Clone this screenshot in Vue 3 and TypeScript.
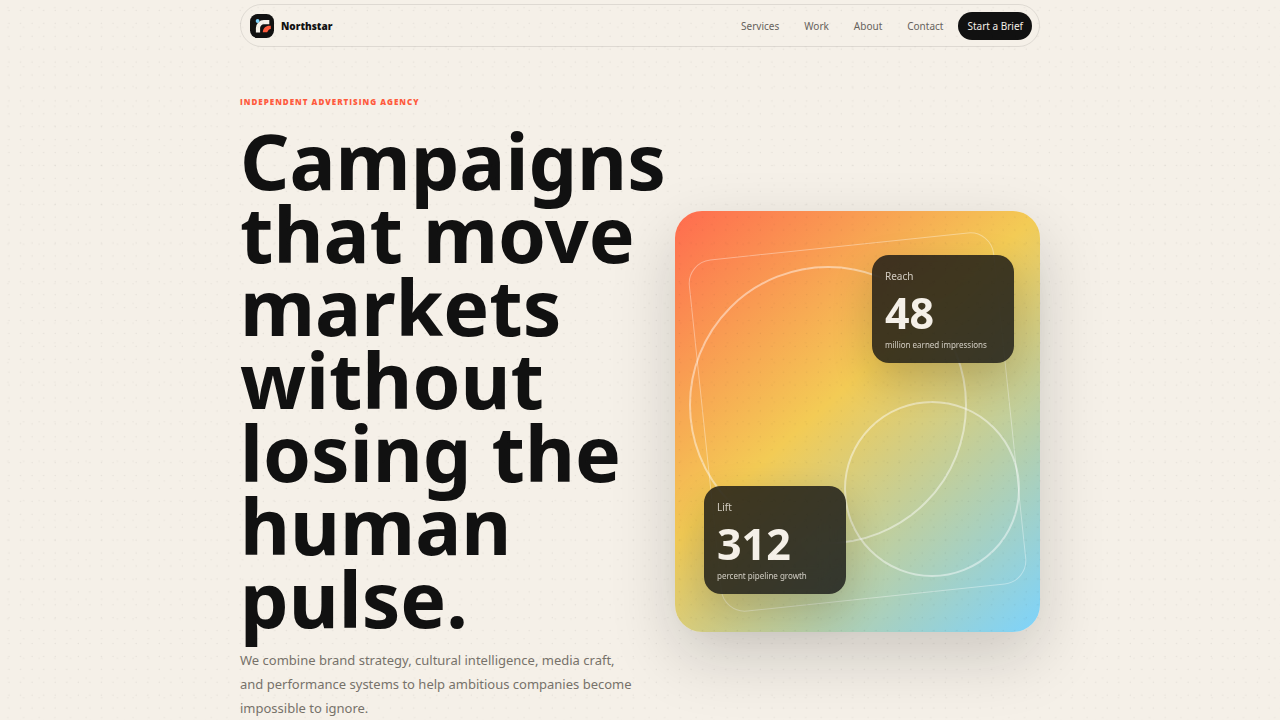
<script setup lang="ts">
interface NavLink {
  label: string
  href: string
}

interface Stat {
  key: string
  label: string
  value: string
  note: string
}

const links: NavLink[] = [
  { label: 'Services', href: '#services' },
  { label: 'Work', href: '#work' },
  { label: 'About', href: '#about' },
  { label: 'Contact', href: '#contact' },
]

const stats: Stat[] = [
  { key: 'reach', label: 'Reach', value: '48', note: 'million earned impressions' },
  { key: 'lift', label: 'Lift', value: '312', note: 'percent pipeline growth' },
]
</script>

<template>
  <div class="page">
    <header class="bar">
      <a class="brand" href="#top">
        <svg class="mark" viewBox="0 0 24 24" aria-hidden="true">
          <rect width="24" height="24" rx="7.5" fill="#111" />
          <path d="M8 18.4V14a5.8 5.8 0 0 1 5.8-5.8h5.5" fill="none" stroke="#f5f0e8" stroke-width="4.2" />
          <path d="M12.8 18.2c0-3.8 3-6.5 6.6-6.5h1.4v3.2c-1.6.2-2.4 1-3.6 3.3z" fill="#ff5a3c" />
          <circle cx="7.6" cy="7" r="1.9" fill="#7dd3fc" />
        </svg>
        <span>Northstar</span>
      </a>
      <nav class="nav" aria-label="Primary">
        <a v-for="link in links" :key="link.href" class="link" :href="link.href">{{ link.label }}</a>
        <a class="cta" href="#brief">Start a Brief</a>
      </nav>
    </header>

    <main id="top" class="hero">
      <div class="copy">
        <p class="eyebrow">Independent advertising agency</p>
        <h1>Campaigns that move markets without losing the human pulse.</h1>
        <p class="lead">
          We combine brand strategy, cultural intelligence, media craft, and performance systems to
          help ambitious companies become impossible to ignore.
        </p>
      </div>
      <div class="art">
        <span class="frame"></span>
        <span class="ring ring-large"></span>
        <span class="ring ring-small"></span>
        <article v-for="stat in stats" :key="stat.key" class="stat" :class="stat.key">
          <span class="stat-label">{{ stat.label }}</span>
          <strong>{{ stat.value }}</strong>
          <small>{{ stat.note }}</small>
        </article>
      </div>
    </main>

    <svg class="grain" aria-hidden="true">
      <defs>
        <pattern id="dots-fine" width="17" height="19" patternUnits="userSpaceOnUse" patternTransform="scale(0.68)">
          <circle cx="13.2" cy="15.4" r="1" fill="#111" fill-opacity="0.07" />
        </pattern>
        <pattern id="dots-wide" width="23" height="29" patternUnits="userSpaceOnUse" patternTransform="scale(0.68)">
          <circle cx="11.6" cy="11.2" r="1" fill="#111" fill-opacity="0.06" />
        </pattern>
      </defs>
      <rect width="100%" height="100%" fill="url(#dots-fine)" />
      <rect width="100%" height="100%" fill="url(#dots-wide)" />
    </svg>
  </div>
</template>

<style>
body {
  margin: 0;
  background: #f5f0e8;
}
</style>

<style scoped>
.page {
  box-sizing: border-box;
  width: min(100% - 32px, 800px);
  min-height: 100vh;
  margin: 0 auto;
  padding-top: 4px;
  color: #111;
  font-family: "Segoe UI", "Noto Sans", "Open Sans", sans-serif;
}

a {
  color: inherit;
  text-decoration: none;
}

.bar {
  display: flex;
  align-items: center;
  justify-content: space-between;
  padding: 7px 7px 6px 9px;
  border: 1px solid rgba(17, 17, 17, 0.1);
  border-radius: 24px;
}

.brand {
  display: flex;
  align-items: center;
  gap: 7px;
  font-family: "Open Sans", "Noto Sans", sans-serif;
  font-size: 10px;
  font-weight: 800;
}

.mark {
  display: block;
  width: 24px;
  height: 24px;
}

.nav {
  display: flex;
  align-items: center;
  gap: 5px;
  font-size: 10px;
  line-height: 28px;
}

.link {
  padding: 0 10px;
  color: #66625c;
}

.cta {
  padding: 0 9px;
  border-radius: 14px;
  background: #111;
  color: #f5f0e8;
}

.hero {
  display: grid;
  grid-template-columns: minmax(0, 400px) minmax(0, 365px);
  justify-content: space-between;
  align-items: center;
  padding-top: 48px;
}

.copy {
  padding-bottom: 28px;
}

.eyebrow {
  margin: 0;
  color: #ff5a3c;
  font-family: "Open Sans", "Noto Sans", sans-serif;
  font-size: 8px;
  font-weight: 800;
  line-height: 14px;
  letter-spacing: 1px;
  text-transform: uppercase;
}

h1 {
  margin: 15px 0 0;
  font-size: 77px;
  font-weight: 700;
  line-height: 73px;
}

.lead {
  margin: 13px 0 0;
  color: #77726a;
  font-size: 13px;
  line-height: 24px;
}

.art {
  position: relative;
  aspect-ratio: 365 / 421;
  border-radius: 27px;
  background: linear-gradient(138deg, #ff6b4f 0%, #f3cb55 44%, #7dd3fc 100%);
  box-shadow: 0 24px 64px rgba(17, 17, 17, 0.18);
}

.frame,
.ring {
  position: absolute;
  box-sizing: border-box;
}

.frame {
  inset: 8%;
  border: 1px solid rgba(255, 255, 255, 0.36);
  border-radius: 24px;
  transform: rotate(-6deg);
}

.ring {
  aspect-ratio: 1;
  border: 2px solid rgba(255, 255, 255, 0.46);
  border-radius: 50%;
}

.ring-large {
  top: 13%;
  left: 14px;
  width: 278px;
}

.ring-small {
  right: 20px;
  bottom: 13%;
  width: 176px;
}

.stat {
  position: absolute;
  display: flex;
  flex-direction: column;
  box-sizing: border-box;
  width: 142px;
  padding: 14px 13px 12px;
  border-radius: 17px;
  background: rgba(17, 17, 17, 0.8);
  box-shadow: 0 16px 40px rgba(17, 17, 17, 0.2);
  backdrop-filter: blur(12px);
  color: #f5f0e8;
}

.reach {
  top: 44px;
  right: 26px;
}

.lift {
  bottom: 38px;
  left: 29px;
}

.stat-label {
  font-size: 10px;
  line-height: 15px;
  opacity: 0.8;
}

.stat strong {
  margin: 7px 0 5px;
  font-size: 43px;
  line-height: 43px;
}

.stat small {
  font-size: 8px;
  line-height: 12px;
  white-space: nowrap;
  opacity: 0.8;
}

.grain {
  position: fixed;
  inset: 0;
  width: 100%;
  height: 100%;
  pointer-events: none;
}

@media (max-width: 760px) {
  .hero {
    grid-template-columns: minmax(0, 1fr);
    gap: 32px;
  }

  .link {
    display: none;
  }
}
</style>
